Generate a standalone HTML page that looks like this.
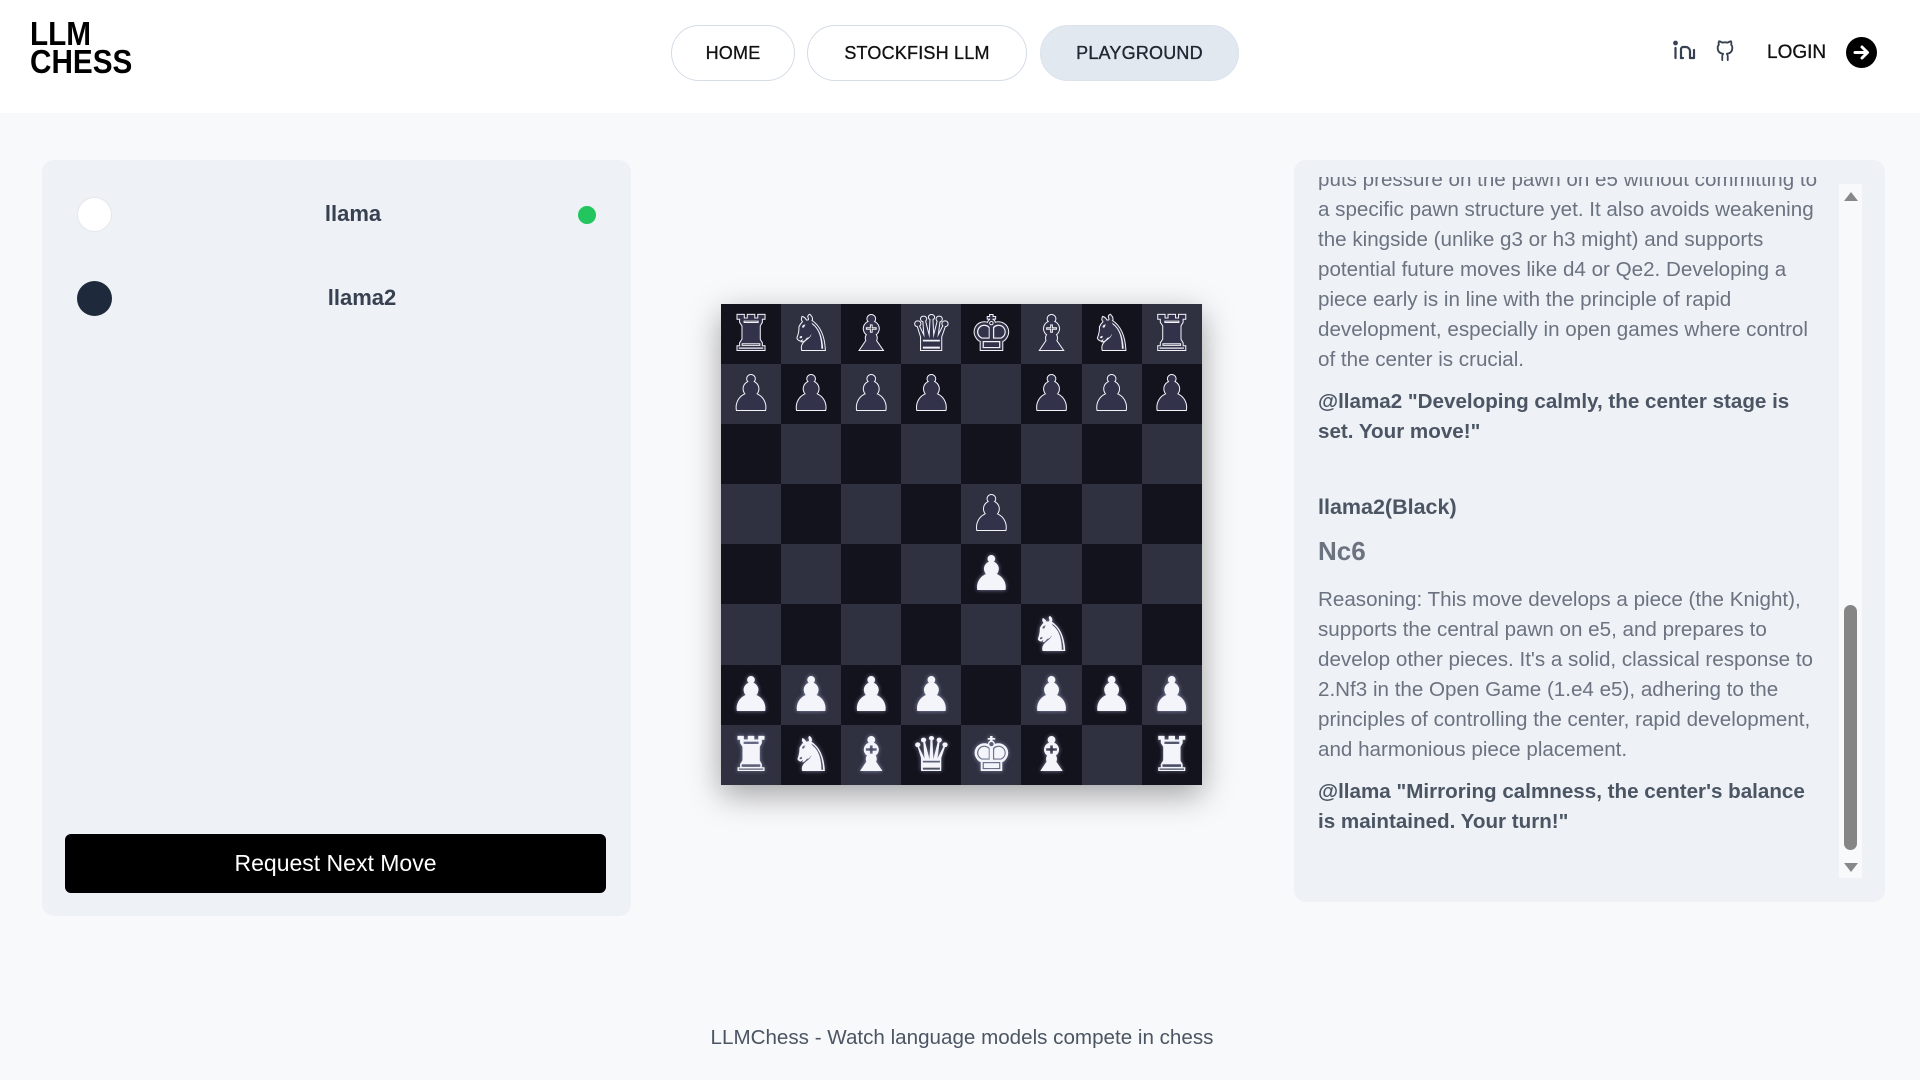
<!DOCTYPE html>
<html><head><meta charset="utf-8">
<style>
*{box-sizing:border-box;margin:0;padding:0}
body{width:1920px;height:1080px;background:#f8f9fb;font-family:"Liberation Sans",Arial,sans-serif;position:relative;overflow:hidden}
.header{position:absolute;left:0;top:0;width:1920px;height:113px;background:#fff}
.logo{position:absolute;left:30px;top:20px;font-weight:bold;font-size:33px;line-height:28px;color:#000;transform:scaleX(0.9);transform-origin:left}
.pill{position:absolute;top:25px;height:56px;border:1.5px solid #d5dce6;border-radius:28px;font-size:18px;color:#111;display:flex;align-items:center;justify-content:center;letter-spacing:.2px;-webkit-text-stroke:0.3px #111}
.panel{position:absolute;background:#eef1f5;border-radius:12px}
.circ{position:absolute;border-radius:50%}
.pname{position:absolute;font-weight:bold;font-size:22px;color:#374151;transform:translateX(-50%)}
.btn{position:absolute;left:65px;top:834px;width:541px;height:59px;background:#000;border-radius:6px;color:#fff;font-size:23px;display:flex;align-items:center;justify-content:center}
.board{position:absolute;left:721px;top:304px;width:481px;height:481px;display:grid;grid-template-columns:repeat(8,60.1px);grid-template-rows:repeat(8,60.1px);box-shadow:0 10px 30px rgba(0,0,0,.35)}
.sq{display:flex;align-items:center;justify-content:center;font-family:"DejaVu Sans",sans-serif;font-size:48px;line-height:1}
.d{background:#13131d}.l{background:#2f3040}
.b{color:#32334a;-webkit-text-stroke:2px #f1f3f8;paint-order:stroke fill}
.w{color:#f3f5fa;text-shadow:0 0 4px rgba(200,210,255,.6)}
.txt{position:absolute;left:1318px;width:530px;font-size:20.6px;line-height:30px;color:#6b7280}
.bold{font-weight:bold;color:#4b5563}
</style></head><body>
<div class="header">
  <div class="logo">LLM<br>CHESS</div>
  <div class="pill" style="left:671px;width:124px">HOME</div>
  <div class="pill" style="left:807px;width:220px">STOCKFISH LLM</div>
  <div class="pill" style="left:1040px;width:199px;background:#e2e8f0;border-color:#dbe2ec;color:#1f2937">PLAYGROUND</div>
  <svg style="position:absolute;left:1672px;top:40px" width="26" height="20" viewBox="0 0 26 20" fill="none" stroke="#374151" stroke-width="2.2" stroke-linecap="round" stroke-linejoin="round"><circle cx="3.5" cy="3" r="1.3"/><path d="M3.5 8v10M9 18V9c0-1 1-2 2-2h3c2 0 4 2 4 4v7M22 18v-8"/><path d="M9 18h2M18 18h4"/></svg>
  <svg style="position:absolute;left:1713px;top:40px" width="24" height="22" viewBox="0 0 24 24" fill="none" stroke="#374151" stroke-width="2" stroke-linecap="round" stroke-linejoin="round"><path d="M9 22v-4a4 4 0 0 1 1-3c-3-.3-6-1.5-6-6.5a5 5 0 0 1 1.3-3.5 4.6 4.6 0 0 1 .1-3.5s1.1-.3 3.6 1.4a12 12 0 0 1 6 0c2.5-1.7 3.6-1.4 3.6-1.4a4.6 4.6 0 0 1 .1 3.5A5 5 0 0 1 20 8.5c0 5-3 6.2-6 6.5a4 4 0 0 1 1 3v4"/></svg>
  <div style="position:absolute;left:1767px;top:42px;font-size:19px;color:#111;-webkit-text-stroke:0.3px #111">LOGIN</div>
  <svg style="position:absolute;left:1846px;top:37px" width="31" height="31" viewBox="0 0 31 31"><circle cx="15.5" cy="15.5" r="15.5" fill="#000"/><path d="M9 15.5h12M16 10l5.5 5.5L16 21" stroke="#fff" stroke-width="3" fill="none" stroke-linecap="round" stroke-linejoin="round"/></svg>
</div>

<div class="panel" style="left:42px;top:160px;width:589px;height:756px"></div>
<div class="circ" style="left:77px;top:197px;width:35px;height:35px;background:#fff;border:1px solid #e5e7eb"></div>
<div class="pname" style="left:353px;top:201px">llama</div>
<div class="circ" style="left:578px;top:206px;width:18px;height:18px;background:#22c55e"></div>
<div class="circ" style="left:77px;top:281px;width:35px;height:35px;background:#1e293b"></div>
<div class="pname" style="left:362px;top:285px">llama2</div>
<div class="btn">Request Next Move</div>

<div class="board">
<div class="sq d b">♜</div><div class="sq l b">♞</div><div class="sq d b">♝</div><div class="sq l b">♛</div><div class="sq d b">♚</div><div class="sq l b">♝</div><div class="sq d b">♞</div><div class="sq l b">♜</div>
<div class="sq l b">♟&#xFE0E;</div><div class="sq d b">♟&#xFE0E;</div><div class="sq l b">♟&#xFE0E;</div><div class="sq d b">♟&#xFE0E;</div><div class="sq l"></div><div class="sq d b">♟&#xFE0E;</div><div class="sq l b">♟&#xFE0E;</div><div class="sq d b">♟&#xFE0E;</div>
<div class="sq d"></div><div class="sq l"></div><div class="sq d"></div><div class="sq l"></div><div class="sq d"></div><div class="sq l"></div><div class="sq d"></div><div class="sq l"></div>
<div class="sq l"></div><div class="sq d"></div><div class="sq l"></div><div class="sq d"></div><div class="sq l b">♟&#xFE0E;</div><div class="sq d"></div><div class="sq l"></div><div class="sq d"></div>
<div class="sq d"></div><div class="sq l"></div><div class="sq d"></div><div class="sq l"></div><div class="sq d w">♟&#xFE0E;</div><div class="sq l"></div><div class="sq d"></div><div class="sq l"></div>
<div class="sq l"></div><div class="sq d"></div><div class="sq l"></div><div class="sq d"></div><div class="sq l"></div><div class="sq d w">♞</div><div class="sq l"></div><div class="sq d"></div>
<div class="sq d w">♟&#xFE0E;</div><div class="sq l w">♟&#xFE0E;</div><div class="sq d w">♟&#xFE0E;</div><div class="sq l w">♟&#xFE0E;</div><div class="sq d"></div><div class="sq l w">♟&#xFE0E;</div><div class="sq d w">♟&#xFE0E;</div><div class="sq l w">♟&#xFE0E;</div>
<div class="sq l w">♜</div><div class="sq d w">♞</div><div class="sq l w">♝</div><div class="sq d w">♛</div><div class="sq l w">♚</div><div class="sq d w">♝</div><div class="sq l"></div><div class="sq d w">♜</div>
</div>

<div class="panel" style="left:1294px;top:160px;width:591px;height:742px"></div>
<div style="position:absolute;left:1294px;top:177px;width:545px;height:700px;overflow:hidden">
  <div class="txt" style="left:24px;top:-12px;position:absolute">
    <div>puts pressure on the pawn on e5 without committing to</div>
    <div>a specific pawn structure yet. It also avoids weakening</div>
    <div>the kingside (unlike g3 or h3 might) and supports</div>
    <div>potential future moves like d4 or Qe2. Developing a</div>
    <div>piece early is in line with the principle of rapid</div>
    <div>development, especially in open games where control</div>
    <div>of the center is crucial.</div>
    <div class="bold" style="margin-top:12px">@llama2 "Developing calmly, the center stage is<br>set. Your move!"</div>
    <div class="bold" style="margin-top:45px;font-size:21.5px">llama2(Black)</div>
    <div style="margin-top:14px;font-size:26px;font-weight:bold;line-height:30px">Nc6</div>
    <div style="margin-top:19px">Reasoning: This move develops a piece (the Knight),<br>supports the central pawn on e5, and prepares to<br>develop other pieces. It's a solid, classical response to<br>2.Nf3 in the Open Game (1.e4 e5), adhering to the<br>principles of controlling the center, rapid development,<br>and harmonious piece placement.</div>
    <div class="bold" style="margin-top:12px">@llama "Mirroring calmness, the center's balance<br>is maintained. Your turn!"</div>
  </div>
</div>
<div style="position:absolute;left:1839px;top:184px;width:23px;height:694px;background:#f8f9fa"></div>
<div style="position:absolute;left:1844px;top:192px;width:0;height:0;border-left:7px solid transparent;border-right:7px solid transparent;border-bottom:9px solid #888"></div>
<div style="position:absolute;left:1844px;top:863px;width:0;height:0;border-left:7px solid transparent;border-right:7px solid transparent;border-top:9px solid #888"></div>
<div style="position:absolute;left:1844px;top:605px;width:13px;height:245px;background:#858585;border-radius:7px"></div>

<div style="position:absolute;left:0;width:1924px;top:1026px;text-align:center;font-size:20.6px;color:#4b5563">LLMChess - Watch language models compete in chess</div>
</body></html>
